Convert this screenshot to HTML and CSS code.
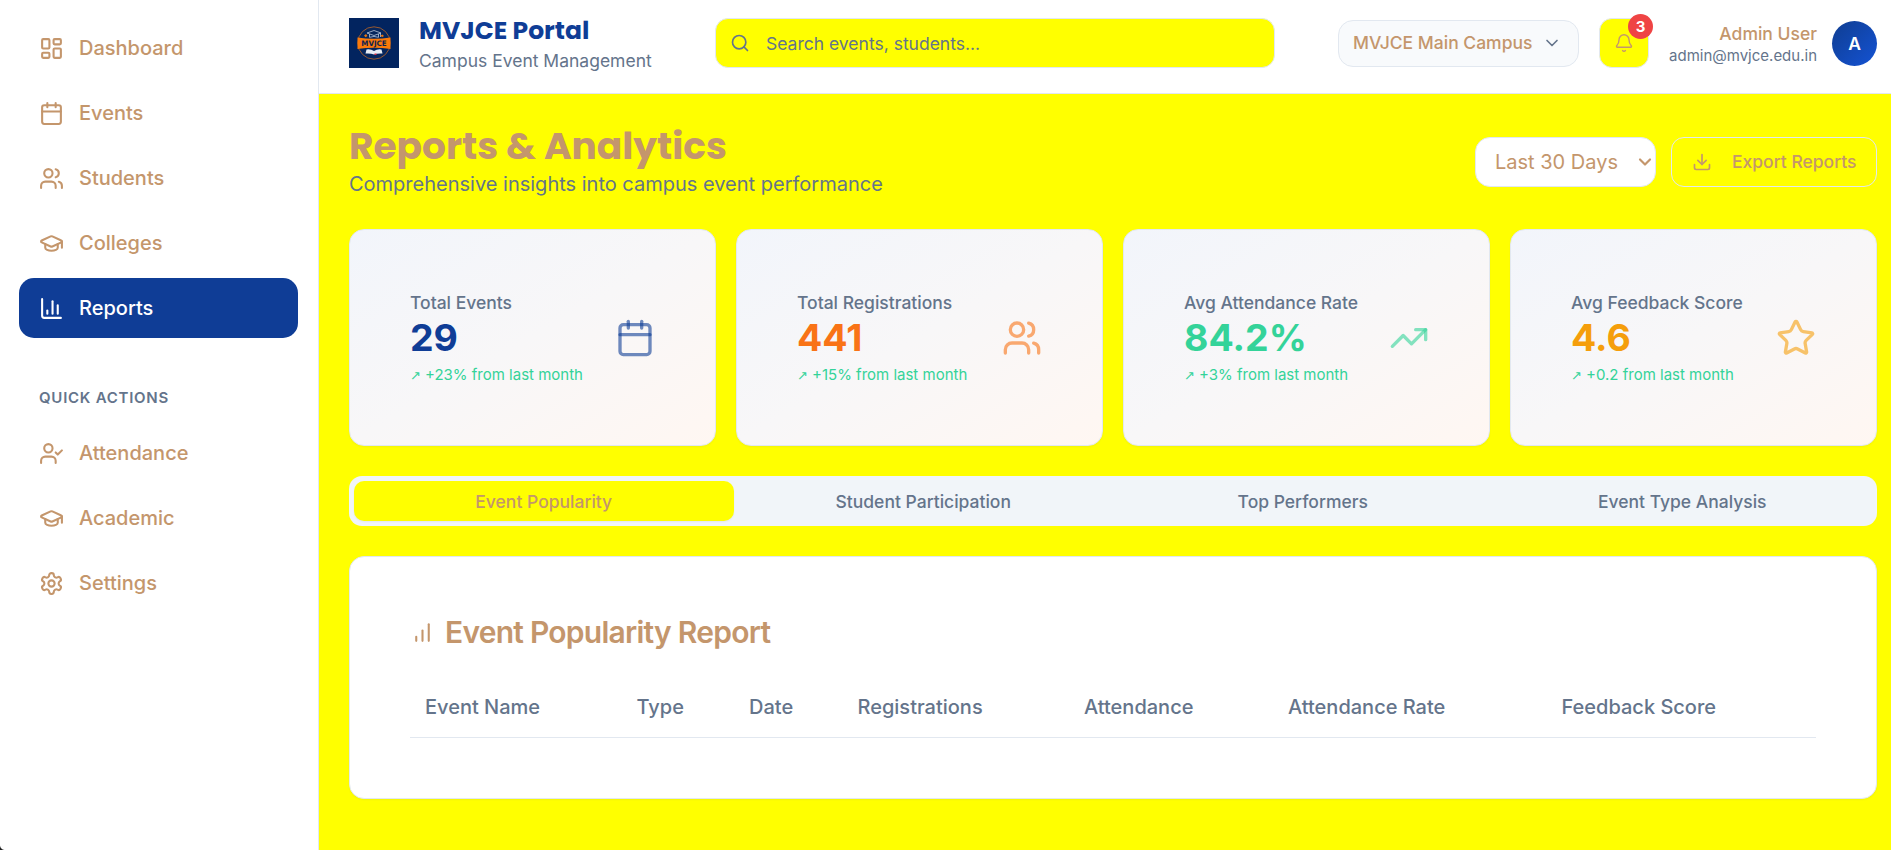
FILE: index.html
```html
<!DOCTYPE html>
<html lang="en">
<head>
<meta charset="utf-8">
<title>MVJCE Portal</title>
<link rel="stylesheet" href="styles.css">
</head>
<body>
<svg class="sprite" aria-hidden="true">
  <symbol id="i-dashboard" viewBox="0 0 24 24"><rect width="7" height="9" x="3" y="3" rx="1"/><rect width="7" height="5" x="14" y="3" rx="1"/><rect width="7" height="9" x="14" y="12" rx="1"/><rect width="7" height="5" x="3" y="16" rx="1"/></symbol>
  <symbol id="i-calendar" viewBox="0 0 24 24"><path d="M8 2v4"/><path d="M16 2v4"/><rect width="18" height="18" x="3" y="4" rx="2"/><path d="M3 10h18"/></symbol>
  <symbol id="i-users" viewBox="0 0 24 24"><path d="M16 21v-2a4 4 0 0 0-4-4H6a4 4 0 0 0-4 4v2"/><circle cx="9" cy="7" r="4"/><path d="M22 21v-2a4 4 0 0 0-3-3.87"/><path d="M16 3.13a4 4 0 0 1 0 7.75"/></symbol>
  <symbol id="i-cap" viewBox="0 0 24 24"><path d="M21.42 10.922a1 1 0 0 0-.019-1.838L12.83 5.18a2 2 0 0 0-1.66 0L2.6 9.08a1 1 0 0 0 0 1.832l8.57 3.908a2 2 0 0 0 1.66 0z"/><path d="M22 10v6"/><path d="M6 12.5V16a6 3 0 0 0 12 0v-3.5"/></symbol>
  <symbol id="i-chart" viewBox="0 0 24 24"><path d="M3 3v16a2 2 0 0 0 2 2h16"/><path d="M18 17V9"/><path d="M13 17V5"/><path d="M8 17v-3"/></symbol>
  <symbol id="i-usercheck" viewBox="0 0 24 24"><path d="m16 11 2 2 4-4"/><path d="M16 21v-2a4 4 0 0 0-4-4H6a4 4 0 0 0-4 4v2"/><circle cx="9" cy="7" r="4"/></symbol>
  <symbol id="i-settings" viewBox="0 0 24 24"><path d="M12.22 2h-.44a2 2 0 0 0-2 2v.18a2 2 0 0 1-1 1.73l-.43.25a2 2 0 0 1-2 0l-.15-.08a2 2 0 0 0-2.73.73l-.22.38a2 2 0 0 0 .73 2.73l.15.1a2 2 0 0 1 1 1.72v.51a2 2 0 0 1-1 1.74l-.15.09a2 2 0 0 0-.73 2.73l.22.38a2 2 0 0 0 2.73.73l.15-.08a2 2 0 0 1 2 0l.43.25a2 2 0 0 1 1 1.73V20a2 2 0 0 0 2 2h.44a2 2 0 0 0 2-2v-.18a2 2 0 0 1 1-1.73l.43-.25a2 2 0 0 1 2 0l.15.08a2 2 0 0 0 2.73-.73l.22-.39a2 2 0 0 0-.73-2.73l-.15-.08a2 2 0 0 1-1-1.74v-.5a2 2 0 0 1 1-1.74l.15-.09a2 2 0 0 0 .73-2.73l-.22-.38a2 2 0 0 0-2.73-.73l-.15.08a2 2 0 0 1-2 0l-.43-.25a2 2 0 0 1-1-1.73V4a2 2 0 0 0-2-2z"/><circle cx="12" cy="12" r="3"/></symbol>
  <symbol id="i-search" viewBox="0 0 24 24"><circle cx="11" cy="11" r="8"/><path d="m21 21-4.3-4.3"/></symbol>
  <symbol id="i-chevron" viewBox="0 0 24 24"><path d="m6 9 6 6 6-6"/></symbol>
  <symbol id="i-bell" viewBox="0 0 24 24"><path d="M10.268 21a2 2 0 0 0 3.464 0"/><path d="M3.262 15.326A1 1 0 0 0 4 17h16a1 1 0 0 0 .74-1.673C19.41 13.956 18 12.499 18 8A6 6 0 0 0 6 8c0 4.499-1.411 5.956-2.738 7.326"/></symbol>
  <symbol id="i-download" viewBox="0 0 24 24"><path d="M21 15v4a2 2 0 0 1-2 2H5a2 2 0 0 1-2-2v-4"/><path d="m7 10 5 5 5-5"/><path d="M12 15V3"/></symbol>
  <symbol id="i-trend" viewBox="0 0 24 24"><path d="m22 7-8.5 8.5-5-5L2 17"/><path d="M16 7h6v6"/></symbol>
  <symbol id="i-star" viewBox="0 0 24 24"><path d="M11.525 2.295a.53.53 0 0 1 .95 0l2.31 4.679a2.123 2.123 0 0 0 1.595 1.16l5.166.756a.53.53 0 0 1 .294.904l-3.736 3.638a2.123 2.123 0 0 0-.611 1.878l.882 5.14a.53.53 0 0 1-.771.56l-4.618-2.428a2.122 2.122 0 0 0-1.973 0L6.396 21.01a.53.53 0 0 1-.77-.56l.881-5.139a2.122 2.122 0 0 0-.611-1.879L2.16 9.795a.53.53 0 0 1 .294-.906l5.165-.755a2.122 2.122 0 0 0 1.597-1.16z"/></symbol>
  <symbol id="i-bars" viewBox="0 0 24 24"><path d="M12 20V10"/><path d="M18 20V4"/><path d="M6 20v-4"/></symbol>
</svg>
<div class="app">
  <aside class="sidebar">
    <nav class="nav">
      <a class="nav-item"><svg class="icon"><use href="#i-dashboard"/></svg>Dashboard</a>
      <a class="nav-item"><svg class="icon"><use href="#i-calendar"/></svg>Events</a>
      <a class="nav-item"><svg class="icon"><use href="#i-users"/></svg>Students</a>
      <a class="nav-item"><svg class="icon"><use href="#i-cap"/></svg>Colleges</a>
      <a class="nav-item active"><svg class="icon"><use href="#i-chart"/></svg>Reports</a>
    </nav>
    <h3 class="nav-title">Quick Actions</h3>
    <nav class="nav">
      <a class="nav-item"><svg class="icon"><use href="#i-usercheck"/></svg>Attendance</a>
      <a class="nav-item"><svg class="icon"><use href="#i-cap"/></svg>Academic</a>
      <a class="nav-item"><svg class="icon"><use href="#i-settings"/></svg>Settings</a>
    </nav>
  </aside>
  <div class="content">
    <header class="topbar">
      <svg class="logo" viewBox="0 0 50 50">
        <rect width="50" height="50" fill="#02245f"/>
        <circle cx="25" cy="25" r="16.2" fill="#06265c" stroke="#a85f2c" stroke-width=".9"/>
        <path d="M8.5 19.5Q25 22 41.5 19.5V31Q25 28.500 8.500 31Z" fill="#fb7a0a"/>
        <path d="m25 12.500 7 2.500-7 2.500-7-2.500zM20.500 16v3.300q4.500-1.700 9 0V16M31.500 15v4" fill="none" stroke="#b9c6dc" stroke-width=".8"/>
        <path d="m15 17.500 2-1.500 1.500 2-2 1.300zM31.500 17.500l2-1 1.500 1.500-2 1.300z" fill="#e8740f"/>
        <path d="M17.500 31.500q4-.8 7.500 1.500 3.500-2.300 7.500-1.500l1 4q-5-.5-8.500 1-3.500-1.500-8.500-1z" fill="#e9edf4"/>
        <path d="M25.500 35.500h2v1.500h-2z" fill="#d8304a"/>
        <text x="25" y="28" text-anchor="middle" textLength="25.500" lengthAdjust="spacingAndGlyphs" class="logo-text">MVJCE</text>
      </svg>
      <div class="brand">
        <div class="brand-name">MVJCE Portal</div>
        <div class="brand-sub">Campus Event Management</div>
      </div>
      <div class="search"><svg class="icon"><use href="#i-search"/></svg><span>Search events, students...</span></div>
      <div class="campus"><span>MVJCE Main Campus</span><svg class="icon"><use href="#i-chevron"/></svg></div>
      <div class="bell"><svg class="icon"><use href="#i-bell"/></svg><span class="badge">3</span></div>
      <div class="user">
        <div class="user-name">Admin User</div>
        <div class="user-mail">admin@mvjce.edu.in</div>
      </div>
      <div class="avatar">A</div>
    </header>
    <main class="main">
      <section class="page-head">
        <div>
          <h1 class="page-title"><span>Reports &amp; Analytics</span></h1>
          <p class="page-sub">Comprehensive insights into campus event performance</p>
        </div>
        <div class="actions">
          <div class="range"><span>Last 30 Days</span><svg class="icon"><use href="#i-chevron"/></svg></div>
          <div class="export"><svg class="icon"><use href="#i-download"/></svg><span>Export Reports</span></div>
        </div>
      </section>
      <section class="stats">
        <div class="stat blue"><div><div class="stat-label">Total Events</div><div class="stat-value">29</div><div class="stat-change"><span class="arrow">↗</span>+23% from last month</div></div><svg class="icon"><use href="#i-calendar"/></svg></div>
        <div class="stat orange"><div><div class="stat-label">Total Registrations</div><div class="stat-value">441</div><div class="stat-change"><span class="arrow">↗</span>+15% from last month</div></div><svg class="icon"><use href="#i-users"/></svg></div>
        <div class="stat green"><div><div class="stat-label">Avg Attendance Rate</div><div class="stat-value">84.2%</div><div class="stat-change"><span class="arrow">↗</span>+3% from last month</div></div><svg class="icon"><use href="#i-trend"/></svg></div>
        <div class="stat amber"><div><div class="stat-label">Avg Feedback Score</div><div class="stat-value">4.6</div><div class="stat-change"><span class="arrow">↗</span>+0.2 from last month</div></div><svg class="icon"><use href="#i-star"/></svg></div>
      </section>
      <section class="tabs">
        <div class="tab selected">Event Popularity</div>
        <div class="tab">Student Participation</div>
        <div class="tab">Top Performers</div>
        <div class="tab">Event Type Analysis</div>
      </section>
      <section class="report">
        <h2 class="report-title"><svg class="icon"><use href="#i-bars"/></svg><span>Event Popularity Report</span></h2>
        <div class="table-head">
          <span>Event Name</span><span>Type</span><span>Date</span><span>Registrations</span><span>Attendance</span><span>Attendance Rate</span><span>Feedback Score</span>
        </div>
      </section>
    </main>
  </div>
</div>
<div class="corner"></div>
</body>
</html>
```
FILE: styles.css
```css
:root {
  --tan: #c4966c;
  --slate: #64748b;
  --navy: #0f3d96;
  --line: #e2e8f0;
  --page: #ffff00;
}
* { box-sizing: border-box; margin: 0; padding: 0; }
body {
  width: 1891px;
  height: 850px;
  overflow: hidden;
  background: var(--page);
  color: var(--tan);
  font: 400 20px/30px Inter, "Liberation Sans", sans-serif;
}
.sprite { position: absolute; width: 0; height: 0; }
.icon {
  flex: none;
  width: 20px;
  height: 20px;
  fill: none;
  stroke: currentColor;
  stroke-width: 2;
  stroke-linecap: round;
  stroke-linejoin: round;
}
.app { display: flex; height: 850px; }
/* rounded window corner */
.corner {
  position: absolute;
  left: 0;
  bottom: 0;
  width: 5px;
  height: 5px;
  background: radial-gradient(circle at 100% 0, transparent 4.5px, #222 5.5px);
}

.sidebar {
  flex: none;
  width: 319px;
  padding: 18px 20px 0 19px;
  background: #fff;
  border-right: 1px solid var(--line);
}
.nav { display: flex; flex-direction: column; gap: 5px; }
.nav-item {
  display: flex;
  align-items: center;
  gap: 15px;
  height: 60px;
  padding: 0 20px;
  border-radius: 15px;
  font-weight: 500;
}
.nav-item .icon { width: 25px; height: 25px; }
.nav-item.active { background: var(--navy); color: #fff; }
.nav-title {
  margin: 50px 0 15px;
  padding: 0 20px;
  color: var(--slate);
  font-size: 15px;
  font-weight: 600;
  line-height: 20px;
  letter-spacing: .75px;
  text-transform: uppercase;
}

.content { flex: 1; min-width: 0; }
.topbar {
  display: flex;
  align-items: center;
  height: 94px;
  padding: 0 14px 7px 30px;
  background: #fff;
  border-bottom: 1px solid var(--line);
}
.logo { flex: none; width: 50px; height: 50px; }
.logo-text { font: 700 7.5px "DejaVu Sans", sans-serif; fill: #10224f; }
.brand { flex: none; width: 296px; margin-left: 20px; padding-top: 1px; }
.brand-name {
  color: var(--navy);
  font: 700 25px/35px Poppins, Inter, sans-serif;
  margin-top: -2px;
}
.brand-sub { color: var(--slate); font-size: 17.5px; line-height: 25px; }
.search {
  display: flex;
  align-items: center;
  gap: 16px;
  flex: none;
  width: 560px;
  height: 50px;
  padding: 0 14px;
  background: var(--page);
  border: 1px solid var(--line);
  border-radius: 13px;
  color: var(--slate);
  font-size: 17.5px;
}
.search span { padding-top: 2px; }
.campus {
  display: flex;
  align-items: center;
  gap: 10px;
  flex: none;
  width: 241px;
  height: 47px;
  margin-left: 63px;
  padding: 0 14px;
  background: #f8fafc;
  border: 1px solid var(--line);
  border-radius: 15px;
  font-size: 17.5px;
  font-weight: 500;
  white-space: nowrap;
}
.campus .icon { color: var(--slate); }
.bell {
  position: relative;
  display: flex;
  align-items: center;
  justify-content: center;
  flex: none;
  width: 50px;
  height: 50px;
  margin-left: 20px;
  background: var(--page);
  border: 1px solid var(--line);
  border-radius: 13px;
}
.bell .icon { stroke-width: 1.7; }
.badge {
  position: absolute;
  top: -5px;
  right: -5px;
  width: 25px;
  height: 25px;
  border-radius: 50%;
  background: #ef4444;
  color: #fff;
  font-size: 15px;
  font-weight: 700;
  line-height: 26px;
  text-align: center;
}
.user { flex: 1; text-align: right; }
.user-name { font-size: 17.5px; font-weight: 500; line-height: 25px; }
.user-mail { color: var(--slate); font-size: 15px; line-height: 20px; }
.avatar {
  flex: none;
  width: 45px;
  height: 45px;
  margin-left: 15px;
  border-radius: 50%;
  background: linear-gradient(135deg, #0f3d91, #1453d4);
  color: #fff;
  font-size: 17.5px;
  font-weight: 600;
  line-height: 46px;
  text-align: center;
}

.main { display: flex; flex-direction: column; gap: 30px; padding: 30px 14px 0 30px; }
.page-head { display: flex; justify-content: space-between; align-items: center; height: 75px; }
.page-title { font: 700 37.5px/45px Poppins, Inter, sans-serif; }
.page-sub { color: var(--slate); }
.actions { display: flex; gap: 15px; }
.range, .export {
  display: flex;
  align-items: center;
  height: 50px;
  border: 1px solid var(--line);
  border-radius: 13px;
}
.range { width: 181px; padding: 0 0 0 19px; background: #fff; border-radius: 15px; }
.range .icon { margin-left: auto; stroke-width: 2.6; }
.export { gap: 20px; width: 206px; padding: 0 20px; font-size: 17.5px; font-weight: 500; white-space: nowrap; }

.stats { display: grid; grid-template-columns: repeat(4, 1fr); gap: 20px; }
.stat {
  display: flex;
  align-items: center;
  justify-content: space-between;
  height: 217px;
  padding: 60px;
  border: 1px solid var(--line);
  border-radius: 15px;
  background: linear-gradient(150deg, #f2f5fb, #f8f7f8 50%, #fff7f2);
  box-shadow: 0 1px 2px rgba(15, 61, 150, .05);
}
.stat-label { color: var(--slate); font-size: 17.5px; font-weight: 500; line-height: 25px; }
.stat-value { font-size: 37.5px; font-weight: 700; line-height: 45px; }
.stat-change { margin-top: 5px; color: #34d399; font-size: 15px; line-height: 20px; }
.arrow { display: inline-block; width: 15px; font: 13px/20px "DejaVu Sans", sans-serif; }
.stat .icon { width: 40px; height: 40px; }
.stat .icon use { opacity: 1; stroke-opacity: .6; }
.blue { color: var(--navy); }
.orange { color: #f97316; }
.green { color: #34d399; }
.amber { color: #f59e0b; }

.tabs {
  display: grid;
  grid-template-columns: repeat(4, 1fr);
  height: 50px;
  padding: 5px;
  border-radius: 13px;
  background: #f1f5f9;
  color: var(--slate);
  font-size: 17.5px;
  font-weight: 500;
  line-height: 42px;
  text-align: center;
}
.tab { height: 40px; border-radius: 10px; }
.tab.selected { background: var(--page); color: var(--tan); box-shadow: 0 1px 2px rgba(0, 0, 0, .05); }

.report {
  height: 243px;
  padding: 60px;
  border: 1px solid var(--line);
  border-radius: 15px;
  background: #fff;
  box-shadow: 0 1px 2px rgba(15, 61, 150, .05);
}
.report-title {
  display: flex;
  align-items: center;
  gap: 10px;
  font-size: 30px;
  font-weight: 600;
  line-height: 30px;
  letter-spacing: -.75px;
}
.report-title .icon { width: 25px; height: 25px; }
.table-head {
  display: grid;
  grid-template-columns: 211.5px 112.5px 108.5px 226.5px 204px 273.5px 1fr;
  margin-top: 30px;
  padding-left: 15px;
  border-bottom: 1px solid var(--line);
  color: var(--slate);
  font-weight: 500;
  line-height: 60px;
}
```
